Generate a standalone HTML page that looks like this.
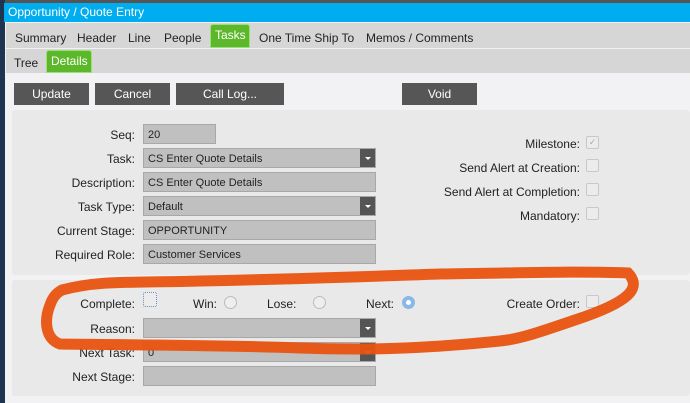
<!DOCTYPE html>
<html><head><style>
*{margin:0;padding:0;box-sizing:border-box}
body{width:690px;height:403px;overflow:hidden;background:#f2f2f4;font-family:"Liberation Sans",sans-serif;font-size:12px;color:#222;position:relative}
.a{position:absolute}
.title{left:4px;top:3px;width:686px;height:19px;background:#00aeef;color:#fff;font-size:12px;padding:2px 0 0 4px}
.tabs{left:6px;top:23px;width:684px;height:25px;background:#d6d6d6}
.sub{left:6px;top:49px;width:684px;height:24px;background:#d6d6d6}
.t{position:absolute;font-size:12px;color:#222}
.g{position:absolute;background:#5cb82a;color:#fff;border:1px solid #9be07a;border-radius:3px 3px 0 0;padding:3px 4px 0}
.btn{position:absolute;top:83px;height:22px;background:#565656;color:#fff;text-align:center;line-height:22px;font-size:12px}
.panel{position:absolute;left:12px;background:#e9e9e9;border-radius:3px}
.lbl{position:absolute;text-align:right;width:130px;left:5px;font-size:12px}
.in{position:absolute;left:143px;height:20px;background:#c0c0c0;border:1px solid #a8a8a8;font-size:11px;padding:4px 0 0 4px}
.dd{position:absolute;right:0;top:0;width:15px;height:18px;background:#555}
.dd:after{content:"";position:absolute;left:5px;top:8px;border:3px solid transparent;border-top:3px solid #fff}
.cb{position:absolute;width:13px;height:13px;border:1px solid #c8c8c8;border-radius:2px;background:#ececec}
.rl{position:absolute;text-align:right;font-size:12px}
.rd{position:absolute;width:13px;height:13px;border:1px solid #bbb;border-radius:50%;background:#eee}
</style></head><body>
<div class="a" style="left:0;top:0;width:690px;height:3px;background:#555"></div>
<div class="a" style="left:0;top:0;width:5px;height:403px;background:#1d3550"></div>
<div class="a title">Opportunity / Quote Entry</div>
<div class="a tabs"></div>
<div class="a sub"></div>
<span class="t" style="left:15px;top:31px">Summary</span>
<span class="t" style="left:77px;top:31px">Header</span>
<span class="t" style="left:128px;top:31px">Line</span>
<span class="t" style="left:164px;top:31px">People</span>
<div class="g" style="left:210px;top:24px;width:40px;height:24px">Tasks</div>
<span class="t" style="left:259px;top:31px">One Time Ship To</span>
<span class="t" style="left:366px;top:31px">Memos / Comments</span>
<span class="t" style="left:14px;top:56px">Tree</span>
<div class="g" style="left:46px;top:50px;width:46px;height:23px">Details</div>
<div class="btn" style="left:14px;width:75px">Update</div>
<div class="btn" style="left:95px;width:75px">Cancel</div>
<div class="btn" style="left:176px;width:108px">Call Log...</div>
<div class="btn" style="left:402px;width:75px">Void</div>
<div class="panel" style="top:110px;width:678px;height:165px"></div>
<div class="panel" style="top:280px;width:678px;height:116px"></div>
<div class="lbl" style="top:128px">Seq:</div><div class="in" style="top:124px;width:73px">20</div>
<div class="lbl" style="top:152px">Task:</div><div class="in" style="top:148px;width:233px">CS Enter Quote Details<div class="dd"></div></div>
<div class="lbl" style="top:176px">Description:</div><div class="in" style="top:172px;width:233px">CS Enter Quote Details</div>
<div class="lbl" style="top:200px">Task Type:</div><div class="in" style="top:196px;width:233px">Default<div class="dd"></div></div>
<div class="lbl" style="top:224px">Current Stage:</div><div class="in" style="top:220px;width:233px">OPPORTUNITY</div>
<div class="lbl" style="top:248px">Required Role:</div><div class="in" style="top:244px;width:233px">Customer Services</div>
<div class="rl" style="left:380px;width:200px;top:137px">Milestone:</div><div class="cb" style="left:586px;top:136px;color:#aaa;font-size:9px;line-height:11px;text-align:center">✓</div>
<div class="rl" style="left:380px;width:200px;top:161px">Send Alert at Creation:</div><div class="cb" style="left:586px;top:159px"></div>
<div class="rl" style="left:380px;width:200px;top:185px">Send Alert at Completion:</div><div class="cb" style="left:586px;top:183px"></div>
<div class="rl" style="left:380px;width:200px;top:209px">Mandatory:</div><div class="cb" style="left:586px;top:207px"></div>
<div class="lbl" style="top:297px">Complete:</div><div class="cb" style="left:143px;top:292px;width:14px;height:15px;border:1px dotted #6a8fc0"></div>
<span class="t" style="left:193px;top:297px">Win:</span><div class="rd" style="left:224px;top:296px"></div>
<span class="t" style="left:267px;top:297px">Lose:</span><div class="rd" style="left:313px;top:296px"></div>
<span class="t" style="left:366px;top:297px">Next:</span><div class="rd" style="left:402px;top:296px;background:#8ab8e6;border-color:#8ab8e6"><div style="position:absolute;left:3px;top:3px;width:5px;height:5px;border-radius:50%;background:#fff"></div></div>
<div class="rl" style="left:480px;width:100px;top:297px">Create Order:</div><div class="cb" style="left:586px;top:295px"></div>
<div class="lbl" style="top:322px">Reason:</div><div class="in" style="top:318px;width:233px"><div class="dd"></div></div>
<div class="lbl" style="top:346px">Next Task:</div><div class="in" style="top:342px;width:233px">0<div class="dd"></div></div>
<div class="lbl" style="top:370px">Next Stage:</div><div class="in" style="top:366px;width:233px"></div>
<svg class="a" style="left:0;top:0" width="690" height="403"><path d="M62,290 C100,280 130,283 200,281 C300,279 380,276 440,274 C520,273 580,271 628,273 C642,288 630,302 575,320 C540,332 520,339 500,341 C440,347 380,351 300,348 C220,345 140,345 60,344 C45,339 44,320 50,305 C53,296 58,292 62,290" fill="none" stroke="#e8530f" stroke-width="11" stroke-linecap="round" opacity="0.95"/></svg>
</body></html>
